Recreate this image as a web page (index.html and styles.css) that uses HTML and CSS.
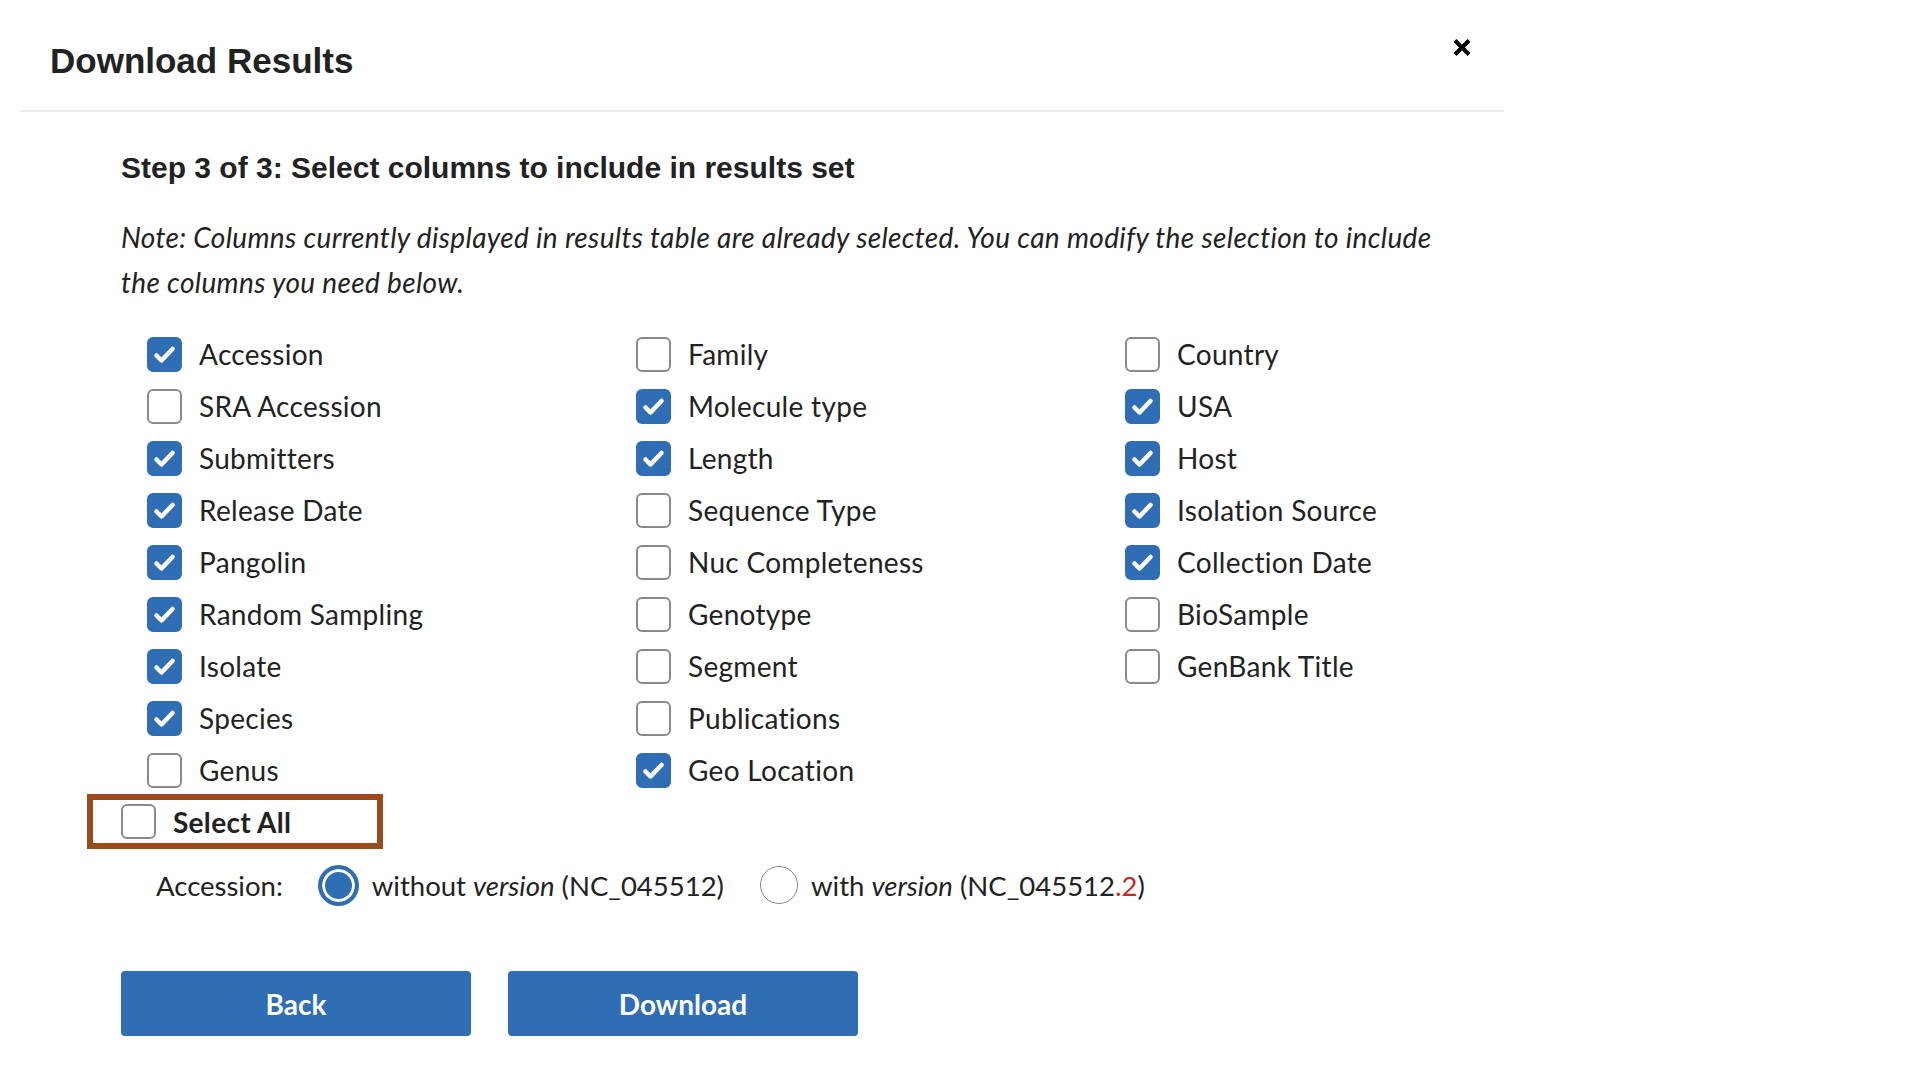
FILE: index.html
```html
<!DOCTYPE html>
<html lang="en">
<head>
<meta charset="utf-8">
<title>Download Results</title>
<link rel="stylesheet" href="styles.css">
</head>
<body>
<div class="modal">
  <header class="modal-header">
    <h1 class="modal-title">Download Results</h1>
    <button class="close" aria-label="Close">
      <svg width="20" height="19" viewBox="0 0 20 19"><path d="M3 2.5 L17 16.5 M17 2.5 L3 16.5" stroke="#000" stroke-width="4" stroke-linecap="butt"/></svg>
    </button>
  </header>
  <div class="modal-body">
    <h2 class="step">Step 3 of 3: Select columns to include in results set</h2>
    <p class="note">Note: Columns currently displayed in results table are already selected. You can modify the selection to include the columns you need below.</p>

    <div class="columns">
      <label class="opt"><span class="box on"></span>Accession</label>
      <label class="opt"><span class="box"></span>SRA Accession</label>
      <label class="opt"><span class="box on"></span>Submitters</label>
      <label class="opt"><span class="box on"></span>Release Date</label>
      <label class="opt"><span class="box on"></span>Pangolin</label>
      <label class="opt"><span class="box on"></span>Random Sampling</label>
      <label class="opt"><span class="box on"></span>Isolate</label>
      <label class="opt"><span class="box on"></span>Species</label>
      <label class="opt"><span class="box"></span>Genus</label>

      <label class="opt"><span class="box"></span>Family</label>
      <label class="opt"><span class="box on"></span>Molecule type</label>
      <label class="opt"><span class="box on"></span>Length</label>
      <label class="opt"><span class="box"></span>Sequence Type</label>
      <label class="opt"><span class="box"></span>Nuc Completeness</label>
      <label class="opt"><span class="box"></span>Genotype</label>
      <label class="opt"><span class="box"></span>Segment</label>
      <label class="opt"><span class="box"></span>Publications</label>
      <label class="opt"><span class="box on"></span>Geo Location</label>

      <label class="opt"><span class="box"></span>Country</label>
      <label class="opt"><span class="box on"></span>USA</label>
      <label class="opt"><span class="box on"></span>Host</label>
      <label class="opt"><span class="box on"></span>Isolation Source</label>
      <label class="opt"><span class="box on"></span>Collection Date</label>
      <label class="opt"><span class="box"></span>BioSample</label>
      <label class="opt"><span class="box"></span>GenBank Title</label>
    </div>

    <div class="select-all">
      <label class="opt strong"><span class="box"></span>Select All</label>
    </div>

    <div class="accession-row">
      <span class="acc-label">Accession:</span>
      <label class="radio-opt"><span class="radio on"></span><span class="radio-text">without <em>version</em> (NC_045512)</span></label>
      <label class="radio-opt"><span class="radio"></span><span class="radio-text">with <em>version</em> (NC_045512<span class="ver">.2</span>)</span></label>
    </div>

    <div class="actions">
      <button class="btn">Back</button>
      <button class="btn">Download</button>
    </div>
  </div>
</div>
</body>
</html>
```

FILE: styles.css
```css
* { box-sizing: border-box; }

body {
  margin: 0;
  background: #fff;
  color: #222;
  font-family: Lato, "Noto Sans", sans-serif;
}

.modal {
  width: 1484px;
  margin-left: 20px;
}

.modal-header {
  position: relative;
  padding: 41px 0 29px 30px;
  border-bottom: 2px solid #ececec;
}

.modal-title {
  margin: 0;
  font-family: "Liberation Sans", Arial, sans-serif;
  font-weight: bold;
  font-size: 35px;
  line-height: 40px;
  color: #222;
}

.close {
  position: absolute;
  top: 38px;
  right: 32px;
  width: 20px;
  height: 19px;
  padding: 0;
  border: 0;
  background: none;
  display: block;
}
.close svg { display: block; }

.modal-body {
  padding-left: 101px;
}

.step {
  margin: 38px 0 0;
  font-family: "Liberation Sans", Arial, sans-serif;
  font-weight: bold;
  font-size: 30px;
  line-height: 36px;
  color: #222;
}

.note {
  margin: 29px 0 0;
  width: 1330px;
  font-style: italic;
  font-size: 28px;
  line-height: 45px;
  letter-spacing: 0.35px;
  color: #222;
}

.columns {
  margin-top: 23px;
  margin-left: 26px;
  display: grid;
  grid-auto-flow: column;
  grid-template-rows: repeat(9, 52px);
  grid-template-columns: repeat(3, 489px);
}

.opt {
  display: flex;
  align-items: center;
  gap: 17px;
  font-size: 28px;
  letter-spacing: 0.3px;
  color: #222;
}

.box {
  width: 35px;
  height: 35px;
  flex: none;
  border: 2px solid #8a8a8a;
  border-radius: 6px;
  background: #fff;
}

.box.on {
  border-color: #2f6db5;
  background: #2f6db5 url("data:image/svg+xml;utf8,<svg xmlns='http://www.w3.org/2000/svg' width='35' height='35' viewBox='0 0 35 35'><path d='M9.5 18.5 L14.5 23.5 L25.5 12' fill='none' stroke='white' stroke-width='4.5' stroke-linecap='round' stroke-linejoin='round'/></svg>") center / 35px 35px no-repeat;
}

.select-all {
  margin-left: -34px;
  margin-top: -2px;
  width: 296px;
  height: 55px;
  border: 6px solid #9b4a1c;
  padding-left: 28px;
  display: flex;
  align-items: center;
}

.opt.strong { font-weight: bold; }

.accession-row {
  margin-top: 14px;
  margin-left: 35px;
  height: 44px;
  display: flex;
  align-items: center;
  font-size: 27.5px;
  color: #222;
}

.acc-label { margin-right: 35px; }

.radio-opt {
  display: flex;
  align-items: center;
  gap: 13px;
  margin-right: 36px;
}

.radio-text em { font-style: italic; }

.radio {
  width: 38px;
  height: 38px;
  flex: none;
  border-radius: 50%;
  border: 1.5px solid #8a8a8a;
  background: #fff;
}

.radio.on {
  width: 41px;
  height: 41px;
  border: 4px solid #2f6db5;
  background: #2f6db5;
  box-shadow: inset 0 0 0 3px #fff;
}

.ver { color: #c62828; }

.actions {
  margin-top: 64px;
  display: flex;
  gap: 37px;
}

.btn {
  width: 350px;
  height: 65px;
  border: 0;
  border-radius: 4px;
  background: #2f6db5;
  color: #fff;
  font-family: Lato, "Noto Sans", sans-serif;
  font-weight: bold;
  font-size: 28px;
}
```
